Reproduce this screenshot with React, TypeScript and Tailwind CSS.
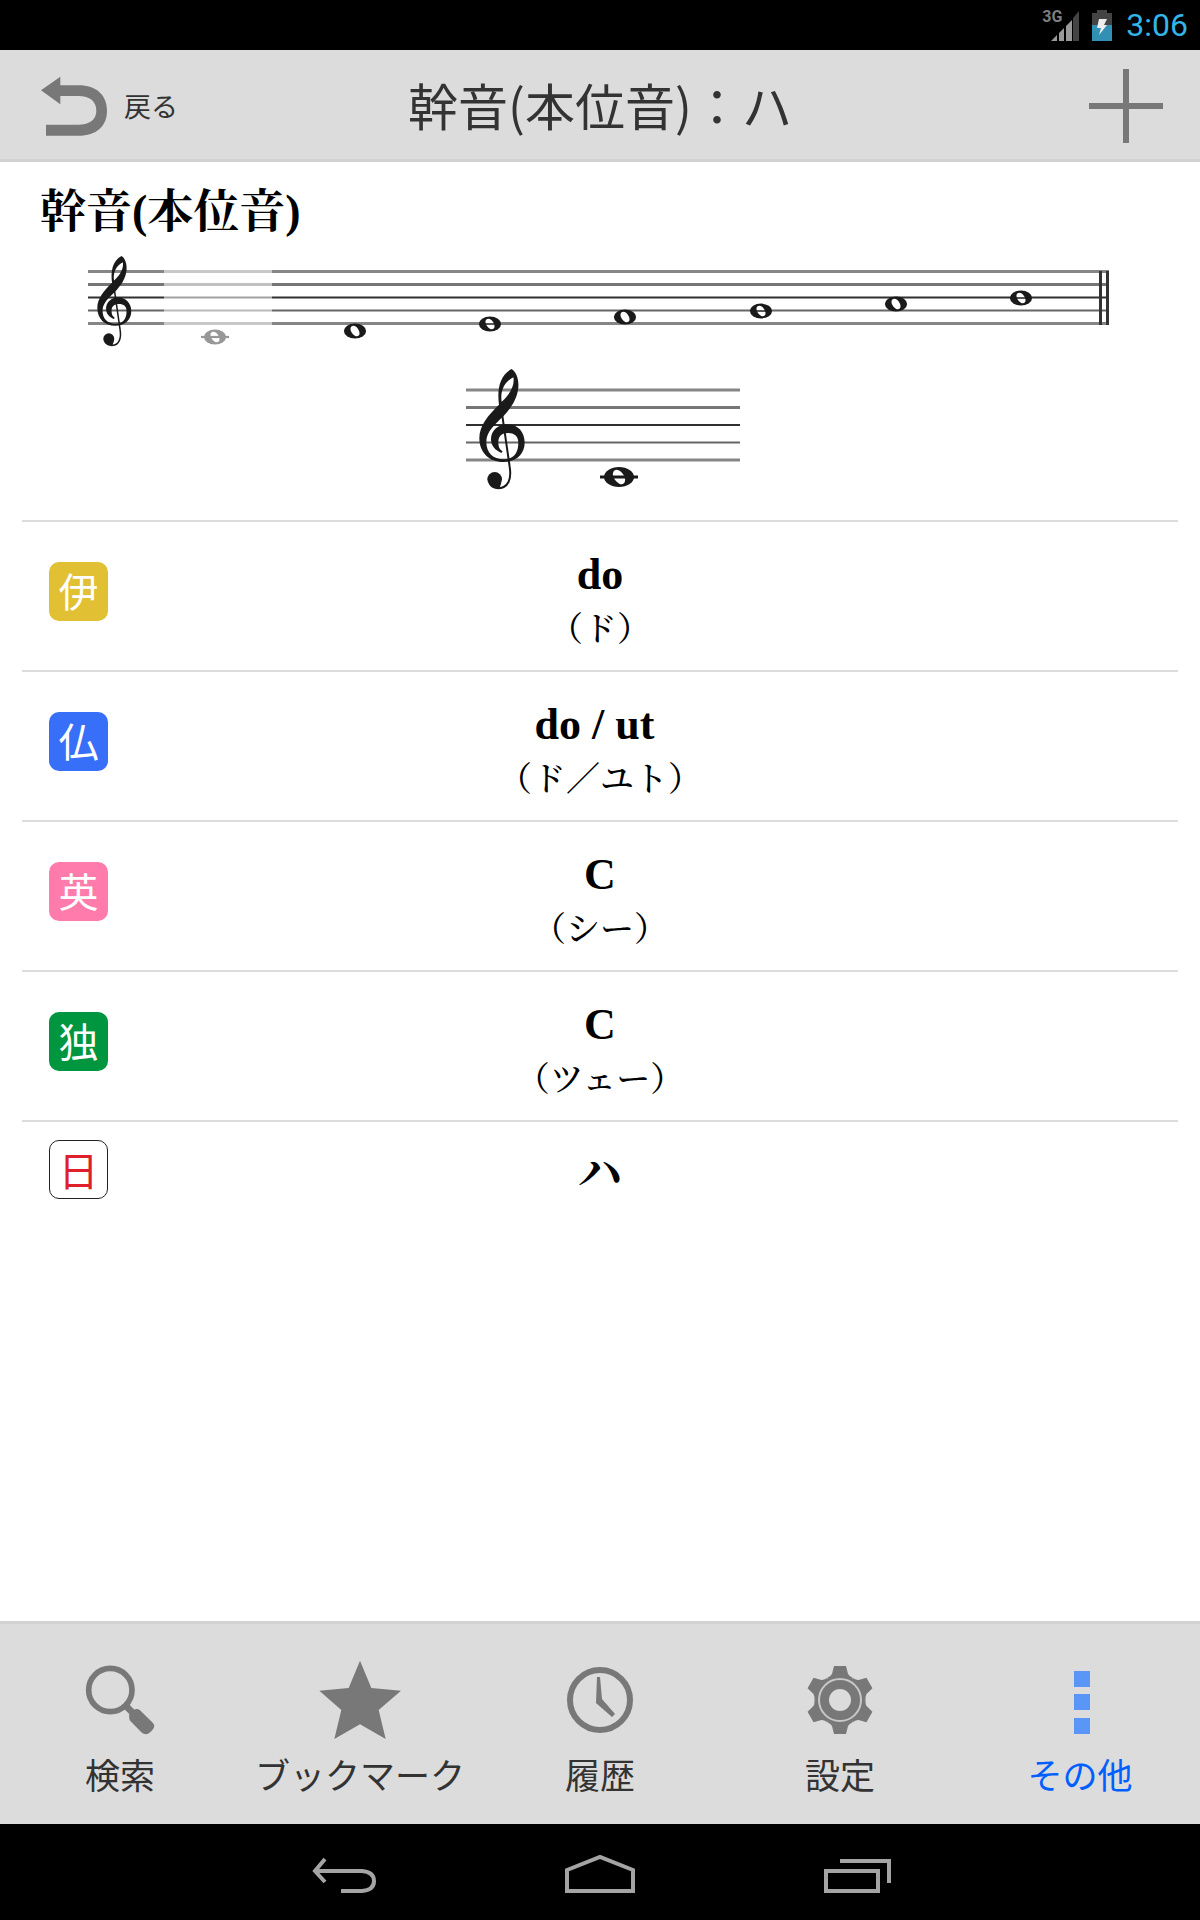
import React, { useState } from 'react';

interface Note {
  x: number;
  y: number;
  ledger?: boolean;
  throughLine?: boolean;
}

interface Reading {
  lang: string;
  badge: string;
  badgeClass: string;
  name: string;
  kana?: string;
}

const scaleNotes: Note[] = [
  { x: 128, y: 87, ledger: true },
  { x: 268, y: 81 },
  { x: 403, y: 74, throughLine: true },
  { x: 538, y: 67 },
  { x: 674, y: 61, throughLine: true },
  { x: 809, y: 54 },
  { x: 934, y: 48, throughLine: true },
];

const readings: Reading[] = [
  { lang: 'イタリア語', badge: '伊', badgeClass: 'bg-[#e2c033] text-white', name: 'do', kana: '（ド）' },
  { lang: 'フランス語', badge: '仏', badgeClass: 'bg-[#386ff8] text-white', name: 'do / ut\u00a0', kana: '（ド／ユト）' },
  { lang: '英語', badge: '英', badgeClass: 'bg-[#ff7bac] text-white', name: 'C', kana: '（シー）' },
  { lang: 'ドイツ語', badge: '独', badgeClass: 'bg-[#009640] text-white', name: 'C', kana: '（ツェー）' },
  { lang: '日本語', badge: '日', badgeClass: 'border border-[#222] bg-white text-[#e01f2d]', name: 'ハ' },
];

const staffStrokes = [
  { color: '#868686', width: 3 },
  { color: '#767676', width: 3 },
  { color: '#303030', width: 2 },
  { color: '#666666', width: 2 },
  { color: '#868686', width: 3 },
];

const StaffLines: React.FC<{ x1: number; x2: number; top: number; gap: number }> = ({ x1, x2, top, gap }) => (
  <>
    {staffStrokes.map((s, i) => (
      <line key={i} x1={x1} x2={x2} y1={top + gap * i} y2={top + gap * i} stroke={s.color} strokeWidth={s.width} />
    ))}
  </>
);

const TrebleClef: React.FC<{ transform: string }> = ({ transform }) => (
  <g transform={transform} fill="#1a1a1a">
    <path
      fillRule="evenodd"
      d="M215 57 C230 66 237 90 235 112 C232 150 210 177 190 199 C162 226 139 246 139 276 C139 308 160 328 190 328 C222 328 235 308 235 278 C235 259 224 249 204 249 C186 249 175 258 175 276 C175 290 178 298 188 304 L184 309 C166 301 153 288 153 268 C153 242 174 223 202 223 C233 223 254 246 254 278 C254 314 226 336 190 336 C148 336 118 308 118 264 C118 226 146 194 177 164 C171 120 178 76 215 57 Z M185 155 C180 124 193 95 220 82 C225 104 211 132 185 155 Z"
    />
    <path d="M186 190 L209 350 C215 386 206 415 172 415" fill="none" stroke="#1a1a1a" strokeWidth="6" />
    <circle cx="164" cy="388" r="22" />
    <path d="M146 400 C152 414 164 418 178 417 L184 398 Z" />
  </g>
);

const WholeNote: React.FC<{ note: Note; scale?: number; color?: string }> = ({ note, scale = 1, color = '#1a1a1a' }) => (
  <g transform={`translate(${note.x} ${note.y}) scale(${scale})`}>
    <ellipse rx="15" ry="10" fill={color} />
    <ellipse rx="8" ry="5" fill="#fff" transform="rotate(55)" />
    {note.ledger && <line x1="-19" x2="19" y1="0" y2="0" stroke={color} strokeWidth="3" />}
    {note.throughLine && <line x1="-8" x2="8" y1="0" y2="0" stroke={color} strokeWidth="2" />}
  </g>
);

const ScaleStaff: React.FC = () => (
  <svg viewBox="0 0 1026 100" className="block w-full" role="img" aria-label="ハからロまでの幹音">
    <StaffLines x1={1} x2={1022} top={21.5} gap={13} />
    <line x1="1013.5" x2="1013.5" y1="21" y2="75" stroke="#333" strokeWidth="3" />
    <line x1="1020.5" x2="1020.5" y1="21" y2="75" stroke="#333" strokeWidth="3" />
    <TrebleClef transform="translate(-19.2 -8.2) scale(.25)" />
    {scaleNotes.map((note) => (
      <WholeNote key={note.x} note={note} scale={0.74} />
    ))}
    <rect x="77" y="0" width="108" height="100" fill="#fff" opacity=".55" />
  </svg>
);

const NoteStaff: React.FC = () => (
  <svg viewBox="0 0 284 126" className="block w-[284px]" role="img" aria-label="ハの音">
    <StaffLines x1={8} x2={282} top={24} gap={17.5} />
    <TrebleClef transform="translate(-18 -16) scale(.3333)" />
    <WholeNote note={{ x: 161, y: 111, ledger: true }} />
  </svg>
);

const SearchIcon: React.FC = () => (
  <svg viewBox="240 150 240 240" className="h-20 w-20" aria-hidden="true">
    <circle cx="331" cy="240" r="65" fill="none" stroke="#787878" strokeWidth="17" />
    <path d="M376 286 L400 310" stroke="#787878" strokeWidth="20" />
    <path
      d="M388 310 L402 299 Q412 294 420 301 L456 336 Q467 346 460 356 Q450 370 438 373 Q430 373 424 367 L391 333 Q386 328 388 310 Z"
      fill="#787878"
    />
  </svg>
);

const StarIcon: React.FC = () => (
  <svg viewBox="960 150 240 240" className="h-20 w-20 overflow-visible" aria-hidden="true">
    <path
      d="M1080 152 L1114 234 L1203 242 L1136 300 L1157 387 L1080 343 L1003 387 L1024 300 L958 242 L1046 234 Z"
      fill="#787878"
    />
  </svg>
);

const ClockIcon: React.FC = () => (
  <svg viewBox="0 0 80 80" className="h-20 w-20" aria-hidden="true">
    <circle cx="40" cy="40" r="30" fill="none" stroke="#787878" strokeWidth="6" />
    <path d="M37 17 H40 L42 39 L55 54 L52 57 L36 43 Z" fill="#787878" />
  </svg>
);

const GearIcon: React.FC = () => (
  <svg viewBox="-40 -40 80 80" className="h-20 w-20" aria-hidden="true">
    <circle r="25" fill="#787878" />
    {[0, 60, 120, 180, 240, 300].map((deg) => (
      <path
        key={deg}
        d="M-6 -34 H6 L8 -26 Q9 -24 13 -22 H-13 Q-9 -24 -8 -26 Z"
        fill="#787878"
        transform={`rotate(${deg})`}
      />
    ))}
    <circle r="21" fill="none" stroke="#c8c8c8" strokeWidth="2" />
    <circle r="11" fill="#dcdcdc" />
  </svg>
);

const MoreIcon: React.FC = () => (
  <svg viewBox="0 0 80 80" className="h-20 w-20" fill="#5a96f5" aria-hidden="true">
    <rect x="34" y="11" width="16" height="16" />
    <rect x="34" y="34" width="16" height="16" />
    <rect x="34" y="58" width="16" height="16" />
  </svg>
);

const tabs = [
  { label: '検索', icon: <SearchIcon /> },
  { label: 'ブックマーク', icon: <StarIcon /> },
  { label: '履歴', icon: <ClockIcon /> },
  { label: '設定', icon: <GearIcon /> },
  { label: 'その他', icon: <MoreIcon /> },
];

const StatusBar: React.FC = () => (
  <div className="flex h-[50px] shrink-0 items-center justify-end gap-3 bg-black pr-3 font-['Roboto',sans-serif]">
    <div className="relative h-8 w-[38px]">
      <svg viewBox="0 0 38 32" className="h-8 w-[38px]" aria-hidden="true">
        <path d="M9 32 L15 26 V32 Z M17 24 L22 19 V32 H17 Z M24 17 L30 11 V32 H24 Z" fill="#9a9a9a" />
        <path d="M31 9 L37 2 V32 H31 Z" fill="#444" />
      </svg>
      <span className="absolute top-0 left-0 text-base leading-4 font-bold text-[#7d7d7d]">3G</span>
    </div>
    <svg viewBox="0 0 20 32" className="h-8 w-5" aria-hidden="true">
      <path d="M5 1 H15 V4 H20 V16 H0 V4 H5 Z" fill="#444" />
      <rect y="16" width="20" height="16" fill="#3390b5" />
      <path d="M7 10 H15 L12 16 H15 L7 26 L9 19 H5 Z" fill="#eee" />
    </svg>
    <time className="pl-[2px] text-[32px] leading-10 text-[#33b5e5]">3:06</time>
  </div>
);

const NavBar: React.FC = () => (
  <nav className="flex h-24 shrink-0 items-center justify-center gap-[184px] bg-black pt-1" aria-label="システム">
    <button type="button" aria-label="戻る">
      <svg viewBox="0 0 72 40" className="h-10 w-[72px]" fill="none" stroke="#a4a4a4" strokeWidth="4">
        <path d="M17 5 L7 17 L17 28 M8 17 H54 Q66 18 66 27 Q66 36 54 37 H33" />
      </svg>
    </button>
    <button type="button" aria-label="ホーム">
      <svg viewBox="0 0 72 40" className="h-10 w-[72px]" fill="none" stroke="#a4a4a4" strokeWidth="4">
        <path d="M3 16 L36 3 L69 16 V37 H3 Z" />
      </svg>
    </button>
    <button type="button" aria-label="最近使ったアプリ">
      <svg viewBox="0 0 72 40" className="h-10 w-[72px]" fill="none" stroke="#a4a4a4" strokeWidth="4">
        <path d="M6 17 H58 V37 H6 Z M20 7 H69 V29" />
      </svg>
    </button>
  </nav>
);

const ReadingRow: React.FC<{ reading: Reading }> = ({ reading }) => (
  <li className="grid grid-cols-[1fr_auto_1fr] items-start border-t-2 border-[#dcdcdc] px-[27px]">
    <span
      title={reading.lang}
      className={`flex h-[59px] w-[59px] justify-center rounded-[10px] font-['Noto_Sans_CJK_JP',sans-serif] text-[40px] leading-[56px] ${
        reading.kana ? 'mt-10' : 'mt-[18px]'
      } ${reading.badgeClass}`}
    >
      {reading.badge}
    </span>
    <div className="pt-[26px] pb-3 text-center">
      <p className="text-[44px] leading-[54px] font-bold">{reading.name}</p>
      {reading.kana && <p className="text-[34px] leading-[56px] font-medium">{reading.kana}</p>}
    </div>
  </li>
);

const App: React.FC = () => {
  const [activeTab, setActiveTab] = useState('その他');

  return (
    <div className="flex min-h-screen flex-col bg-white font-['Noto_Sans_CJK_JP',sans-serif] text-[#333]">
      <StatusBar />
      <header className="grid h-28 shrink-0 grid-cols-[1fr_auto_1fr] items-center border-b-[3px] border-[#d2d2d2] bg-[#dcdcdc] px-9 pt-[2px]">
        <button type="button" className="flex items-center gap-4 justify-self-start pl-1">
          <svg viewBox="120 225 204 186" className="h-[62px] w-[68px]" aria-hidden="true">
            <path
              d="M123 271 L181 230 V256 H235 C290 256 321 286 321 332 C321 378 290 407 235 407 H138 V374 H235 C270 374 289 358 289 332 C289 304 270 288 235 288 H181 V313 Z"
              fill="#787878"
            />
          </svg>
          <span className="text-[27px] leading-8">戻る</span>
        </button>
        <h1 className="pb-1 text-[50px] leading-[60px]">幹音(本位音)：ハ</h1>
        <button type="button" aria-label="追加" className="justify-self-end">
          <svg viewBox="0 0 76 76" className="h-[76px] w-[76px]" aria-hidden="true">
            <path d="M38 1 V75 M1 38 H75" stroke="#787878" strokeWidth="6" />
          </svg>
        </button>
      </header>

      <main className="flex-1 font-['Liberation_Serif','Noto_Serif_CJK_JP','Noto_Sans_CJK_JP',serif] text-black">
        <h2 className="px-10 pt-5 text-[46px] leading-[60px] font-bold">幹音(本位音)</h2>
        <div className="px-[87px] pt-2">
          <ScaleStaff />
        </div>
        <div className="flex justify-center pt-4 pb-7">
          <NoteStaff />
        </div>
        <ul className="mx-[22px]">
          {readings.map((reading) => (
            <ReadingRow key={reading.badge} reading={reading} />
          ))}
        </ul>
      </main>

      <nav className="grid shrink-0 grid-cols-5 border-t-[3px] border-[#d2d2d2] bg-[#dcdcdc]" aria-label="メニュー">
        {tabs.map((tab) => (
          <button
            key={tab.label}
            type="button"
            onClick={() => setActiveTab(tab.label)}
            className={`flex flex-col items-center gap-[14px] pt-9 pb-[30px] text-[35px] leading-10 ${
              tab.label === activeTab ? 'text-[#0060ff]' : 'text-[#333]'
            }`}
          >
            {tab.icon}
            <span>{tab.label}</span>
          </button>
        ))}
      </nav>
      <NavBar />
    </div>
  );
};

export default App;
